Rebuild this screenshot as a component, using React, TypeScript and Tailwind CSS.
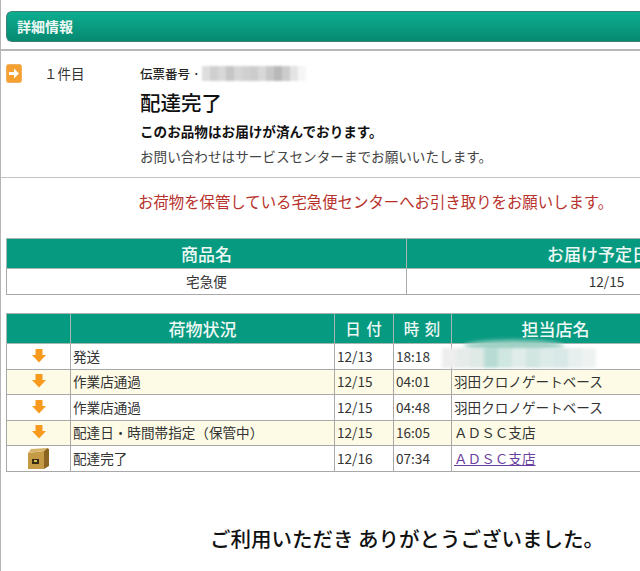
const FONT = "font-['Noto_Sans_CJK_JP','Noto_Sans',sans-serif]";

type StatusRow = {
  status: string;
  date: string;
  time: string;
  shop: string;
  done?: boolean;
  blurred?: boolean;
};

const rows: StatusRow[] = [
  { status: '発送', date: '12/13', time: '18:18', shop: '', blurred: true },
  { status: '作業店通過', date: '12/15', time: '04:01', shop: '羽田クロノゲートベース' },
  { status: '作業店通過', date: '12/15', time: '04:48', shop: '羽田クロノゲートベース' },
  { status: '配達日・時間帯指定（保管中）', date: '12/15', time: '16:05', shop: 'ＡＤＳＣ支店' },
  { status: '配達完了', date: '12/16', time: '07:34', shop: 'ＡＤＳＣ支店', done: true },
];

const ArrowRightIcon = () => (
  <svg width="16" height="19" viewBox="0 0 16 19" className="block">
    <rect x="0.5" y="0.5" width="15" height="18" rx="2" fill="#f5a030" stroke="#f0b060" />
    <path d="M3 8h5V4.5L13 9.5l-5 5V11H3z" fill="#fff" />
  </svg>
);

const ArrowDownIcon = () => (
  <svg width="14" height="15" viewBox="0 0 14 15" className="mx-auto -mt-[2px] block">
    <path d="M3.5 1h7v6h3.5L7 14.5 0 7h3.5z" fill="#f79a1e" />
  </svg>
);

const BoxIcon = () => (
  <svg width="21" height="21" viewBox="0 0 21 21" className="mx-auto block">
    <path d="M0 5 16 3v18H0z" fill="#c49a45" />
    <path d="M16 3l3-3 2 1v17l-5 3z" fill="#8a6420" />
    <path d="M0 5 3 1l16-1-3 3z" fill="#d8b468" />
    <rect x="4" y="11" width="7" height="5" fill="#3a2c10" />
    <rect x="6" y="12" width="3" height="2" fill="#d6c060" />
  </svg>
);

const BlurBlocks = ({ blocks, className, blockClass }: { blocks: string[]; className: string; blockClass: string }) => (
  <div className={`absolute flex ${className}`}>
    {blocks.map((c, i) => (
      <div key={i} className={`h-full ${blockClass}`} style={{ backgroundColor: c }} />
    ))}
  </div>
);

export default function App() {
  return (
    <div className={`${FONT} h-[571px] w-[640px] overflow-hidden border-l border-[#b5b5b5] bg-white text-[#333]`}>
      <div className="pt-[11px] pl-[5px]">
        <div className="flex h-[31px] w-[700px] items-center rounded-l-[6px] border-y border-l border-[#3f7f78] bg-gradient-to-b from-[#0cae90] to-[#078a72] pl-[10px] text-[14px] font-bold text-[#eef8f5]">
          詳細情報
        </div>
      </div>

      <div className="mt-[7px] h-[2px] bg-[#b8b8b8]" />

      <div className="flex pt-[13px] pl-[5px]">
        <div className="w-[36px]">
          <ArrowRightIcon />
        </div>
        <div className="w-[98px] pl-[2px] text-[13.5px] leading-[19px]">１件目</div>
        <div className="relative">
          <div className="text-[12.5px] leading-[19px] font-medium text-[#222]">伝票番号 ·</div>
          <BlurBlocks
            className="top-[2px] left-[62px] h-[15px] blur-[1px]"
            blockClass="w-[8px]"
            blocks={['#dedede', '#cfcfcf', '#d8d8d8', '#c6c6c6', '#d6d6d6', '#d0d0d0', '#cccccc', '#d8d8d8', '#c8c8c8', '#b8b8b8', '#cccccc', '#e4e4e4', '#f6f6f6']}
          />
          <div className="mt-[5px] text-[20.5px] leading-[28px] font-medium text-[#111]">配達完了</div>
          <div className="mt-[6px] text-[13.6px] leading-[19px] font-bold text-[#111]">
            このお品物はお届けが済んでおります。
          </div>
          <div className="mt-[6px] text-[13.6px] leading-[19px] text-[#444]">
            お問い合わせはサービスセンターまでお願いいたします。
          </div>
        </div>
      </div>

      <div className="mt-[11px] h-[1px] bg-[#c4c4c4]" />

      <div className="mt-[13px] pl-[137px] text-[15.4px] leading-[20px] whitespace-nowrap text-[#b8322c]">
        お荷物を保管している宅急便センターへお引き取りをお願いします。
      </div>

      <div className="mt-[27px] pl-[5px]">
        <table className="w-[800px] table-fixed border-collapse">
          <thead>
            <tr className="h-[30px] bg-[#069a80] text-[17px] text-[#eef8f5]">
              <th className="w-[400px] border border-[#a9b5b0] py-0 font-medium">商品名</th>
              <th className="w-[400px] border border-[#a9b5b0] py-0 font-medium">お届け予定日時</th>
            </tr>
          </thead>
          <tbody>
            <tr className="h-[26px] text-center text-[13.6px] text-[#333]">
              <td className="border border-[#a8a8a8] py-0">宅急便</td>
              <td className="border border-[#a8a8a8] py-0">12/15</td>
            </tr>
          </tbody>
        </table>
      </div>

      <div className="mt-[18px] pl-[5px]">
        <table className="w-[800px] table-fixed border-collapse">
          <thead>
            <tr className="h-[30px] bg-[#069a80] text-[17px] text-[#eef8f5]">
              <th className="w-[64px] border border-[#a9b5b0] py-0" />
              <th className="w-[264px] border border-[#a9b5b0] py-0 font-medium">荷物状況</th>
              <th className="w-[59px] border border-[#a9b5b0] py-0 text-[15.5px] font-medium tracking-[1px]">日 付</th>
              <th className="w-[58px] border border-[#a9b5b0] py-0 text-[15.5px] font-medium tracking-[1px]">時 刻</th>
              <th className="w-[355px] border border-[#a9b5b0] py-0 pr-[147px] font-medium">担当店名</th>
            </tr>
          </thead>
          <tbody>
            {rows.map((row, i) => (
              <tr key={i} className={`h-[25.5px] text-[13.6px] leading-[19px] text-[#333] ${i % 2 === 1 ? 'bg-[#fdfbe6]' : 'bg-white'}`}>
                <td className="border border-[#a8a8a8] py-0">{row.done ? <BoxIcon /> : <ArrowDownIcon />}</td>
                <td className="border border-[#a8a8a8] px-[2px] py-0">{row.status}</td>
                <td className="border border-[#a8a8a8] px-[2px] py-0">{row.date}</td>
                <td className="border border-[#a8a8a8] px-[2px] py-0">{row.time}</td>
                <td className="relative border border-[#a8a8a8] px-[2px] py-0">
                  {row.blurred ? (
                    <>
                      <div className="absolute -top-[4px] left-[12px] h-[12px] w-[100px] rounded-[50%] bg-[#9fd0c4] blur-[2px]" />
                      <BlurBlocks
                        className="top-[4px] -left-[10px] h-[20px] blur-[1.5px]"
                        blockClass="w-[14px]"
                        blocks={['#eeeeee', '#e6ecea', '#dfe9e6', '#b8dcd4', '#d0e6e0', '#e0ece9', '#d2e6e1', '#dcebe8', '#d8e8e6', '#e6efee', '#eef3f2']}
                      />
                    </>
                  ) : row.done ? (
                    <a href="#" className="text-[#6b3fa0] underline">{row.shop}</a>
                  ) : (
                    row.shop
                  )}
                </td>
              </tr>
            ))}
          </tbody>
        </table>
      </div>

      <div className="mt-[52px] pl-[209px] text-[20.5px] leading-[28px] font-medium whitespace-nowrap text-[#111]">
        ご利用いただき ありがとうございました。
      </div>
    </div>
  );
}
